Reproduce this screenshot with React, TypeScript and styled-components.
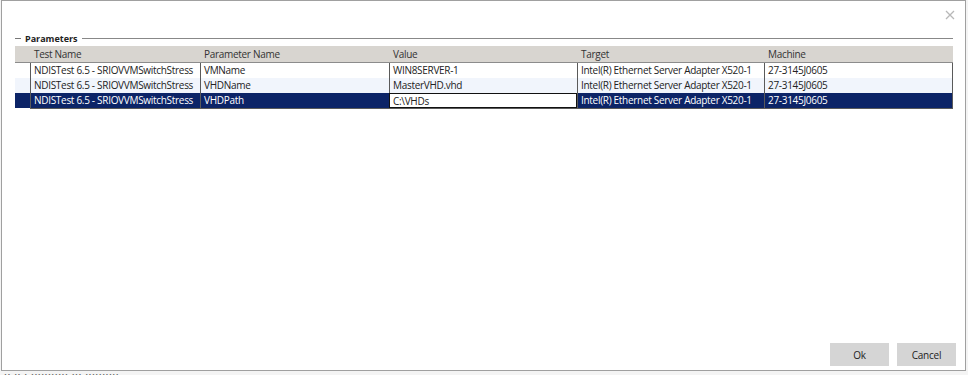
import styled, { createGlobalStyle } from "styled-components";

interface ParamRow {
  test: string;
  name: string;
  value: string;
  target: string;
  machine: string;
}

const rows: ParamRow[] = [
  {
    test: "NDISTest 6.5 - SRIOVVMSwitchStress",
    name: "VMName",
    value: "WIN8SERVER-1",
    target: "Intel(R) Ethernet Server Adapter X520-1",
    machine: "27-3145J0605",
  },
  {
    test: "NDISTest 6.5 - SRIOVVMSwitchStress",
    name: "VHDName",
    value: "MasterVHD.vhd",
    target: "Intel(R) Ethernet Server Adapter X520-1",
    machine: "27-3145J0605",
  },
  {
    test: "NDISTest 6.5 - SRIOVVMSwitchStress",
    name: "VHDPath",
    value: "C:\\VHDs",
    target: "Intel(R) Ethernet Server Adapter X520-1",
    machine: "27-3145J0605",
  },
];

const GlobalStyle = createGlobalStyle`
  html, body {
    margin: 0;
    padding: 0;
    background: #ffffff;
    overflow: hidden;
  }
  body {
    font-family: "Open Sans", "Noto Sans", sans-serif;
  }
`;

const Screen = styled.div`
  width: 968px;
  height: 375px;
  position: relative;
  background: #f4f4f4;
  overflow: hidden;
`;

const Dialog = styled.div`
  position: absolute;
  left: 1px;
  top: 0;
  width: 963px;
  height: 369px;
  background: #ffffff;
  border: 1px solid #a0a0a0;
  display: flex;
  flex-direction: column;
`;

const UnderText = styled.div`
  position: absolute;
  left: 4px;
  bottom: -6px;
  font-size: 11px;
  color: #666;
  white-space: nowrap;
  letter-spacing: 0.5px;
`;

const TitleBar = styled.div`
  height: 30px;
  display: flex;
  justify-content: flex-end;
  align-items: center;
  padding-right: 10px;
`;

const CloseButton = styled.div`
  width: 10px;
  height: 10px;
  margin-bottom: 2px;
  display: flex;
`;

const Group = styled.div`
  margin: 0 12px 0 13px;
`;

const Legend = styled.div`
  display: flex;
  align-items: center;
  gap: 4px;
  height: 14px;
  font-size: 9px;
  font-weight: 700;
  color: #222;
  &::before {
    content: "";
    width: 6px;
    border-top: 1px solid #777;
  }
  &::after {
    content: "";
    flex: 1;
    border-top: 1px solid #888;
  }
`;

const Table = styled.div`
  margin-top: 1px;
  font-size: 10px;
  letter-spacing: -0.3px;
`;

const cols = "15px 170px 189px 188px 187px 189px";

const HeaderRow = styled.div`
  display: grid;
  grid-template-columns: ${cols};
  height: 16px;
  background: #d8d5d0;
  border-bottom: 1px solid #8c8c8c;
  color: #333;
  line-height: 16px;
`;

const HeadCell = styled.div`
  padding-left: 4px;
  white-space: nowrap;
  overflow: hidden;
`;

const Body = styled.div`
  display: flex;
  flex-direction: column;
`;

const Row = styled.div<{ $tone: "white" | "alt" | "selected" }>`
  display: grid;
  grid-template-columns: ${cols};
  height: 15px;
  line-height: 14px;
  background: ${(p) =>
    p.$tone === "selected" ? "#0c2467" : p.$tone === "alt" ? "#f1f5fc" : "#ffffff"};
  color: ${(p) => (p.$tone === "selected" ? "#ffffff" : "#222")};
`;

const Gutter = styled.div``;

const Cell = styled.div<{ $editing?: boolean; $last?: boolean }>`
  padding-left: 3px;
  white-space: nowrap;
  overflow: hidden;
  border-left: 1px solid #5a5a5a;
  border-right: ${(p) => (p.$last ? "1px solid #5a5a5a" : "none")};
  ${(p) =>
    p.$editing
      ? `background: #ffffff; color: #222; border: 1px solid #111; border-right: 1px solid #111;`
      : ""}
`;

const LastRowEdge = styled.div`
  border-top: 1px solid #5a5a5a;
  margin-left: 15px;
`;

const Spacer = styled.div`
  flex: 1;
`;

const Footer = styled.div`
  display: flex;
  justify-content: flex-end;
  gap: 8px;
  padding: 0 9px 4px 0;
`;

const Button = styled.div`
  width: 59px;
  height: 23px;
  background: #d5d5d5;
  color: #222;
  font-size: 10px;
  letter-spacing: -0.2px;
  display: flex;
  align-items: center;
  justify-content: center;
`;

export default function App() {
  return (
    <Screen>
      <GlobalStyle />
      <UnderText>  ·· ·· ·  ··········· ··· ··········</UnderText>
      <Dialog>
        <TitleBar>
          <CloseButton>
            <svg width="10" height="10" viewBox="0 0 10 10">
              <path d="M1 1 L9 9 M9 1 L1 9" stroke="#b8b8b8" strokeWidth="1.3" />
            </svg>
          </CloseButton>
        </TitleBar>
        <Group>
          <Legend>Parameters</Legend>
          <Table>
            <HeaderRow>
              <HeadCell />
              <HeadCell>Test Name</HeadCell>
              <HeadCell>Parameter Name</HeadCell>
              <HeadCell>Value</HeadCell>
              <HeadCell>Target</HeadCell>
              <HeadCell>Machine</HeadCell>
            </HeaderRow>
            <Body>
              {rows.map((r, i) => (
                <Row key={r.name} $tone={i === 2 ? "selected" : i === 1 ? "alt" : "white"}>
                  <Gutter />
                  <Cell>{r.test}</Cell>
                  <Cell>{r.name}</Cell>
                  <Cell $editing={i === 2}>{r.value}</Cell>
                  <Cell>{r.target}</Cell>
                  <Cell $last>{r.machine}</Cell>
                </Row>
              ))}
            </Body>
            <LastRowEdge />
          </Table>
        </Group>
        <Spacer />
        <Footer>
          <Button>Ok</Button>
          <Button>Cancel</Button>
        </Footer>
      </Dialog>
    </Screen>
  );
}
